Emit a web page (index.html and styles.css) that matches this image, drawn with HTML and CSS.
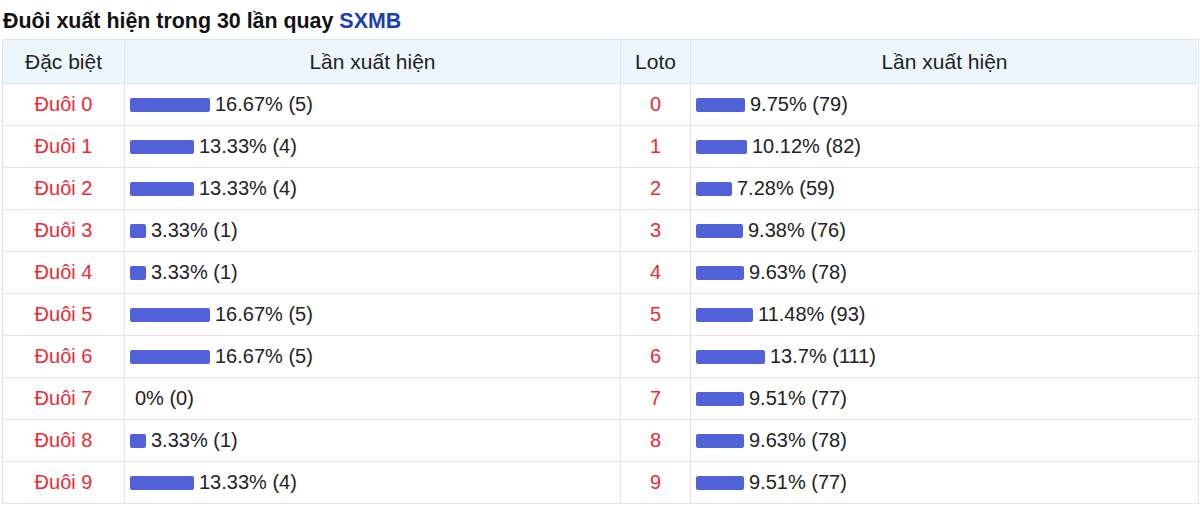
FILE: index.html
```html
<!DOCTYPE html>
<html lang="vi">
<head>
<meta charset="UTF-8" />
<meta name="viewport" content="width=device-width, initial-scale=1" />
<title>Đuôi xuất hiện SXMB</title>
<link rel="stylesheet" href="styles.css">
</head>
<body>
  <h3 class="title">Đuôi xuất hiện trong 30 lần quay <span class="brand">SXMB</span></h3>

  <table class="stats">
    <thead>
      <tr>
        <th class="col-name">Đặc biệt</th>
        <th class="col-bar">Lần xuất hiện</th>
        <th class="col-loto">Loto</th>
        <th class="col-bar2">Lần xuất hiện</th>
      </tr>
    </thead>
    <tbody id="statsBody"></tbody>
  </table>

<script>
  const special = [
    [16.67, 5], [13.33, 4], [13.33, 4], [3.33, 1], [3.33, 1],
    [16.67, 5], [16.67, 5], [0, 0], [3.33, 1], [13.33, 4]
  ];
  const loto = [
    [9.75, 79], [10.12, 82], [7.28, 59], [9.38, 76], [9.63, 78],
    [11.48, 93], [13.7, 111], [9.51, 77], [9.63, 78], [9.51, 77]
  ];

  function bar(pct, count, scale) {
    const w = Math.round(pct * scale);
    const b = w > 0 ? `<span class="bar" style="width:${w}px"></span>` : `<span class="bar empty"></span>`;
    return `${b}<span class="val">${pct}% (${count})</span>`;
  }

  const body = document.getElementById("statsBody");
  for (let i = 0; i < 10; i++) {
    const tr = document.createElement("tr");
    tr.innerHTML = `
      <td class="name">Đuôi ${i}</td>
      <td class="cell-bar">${bar(special[i][0], special[i][1], 4.8)}</td>
      <td class="name">${i}</td>
      <td class="cell-bar">${bar(loto[i][0], loto[i][1], 5)}</td>
    `;
    body.appendChild(tr);
  }
</script>
</body>
</html>
```

FILE: styles.css
```css
* {
  box-sizing: border-box;
}
body {
  margin: 0;
  padding: 0 1px 0 2px;
  font-family: "Liberation Sans", Arial, sans-serif;
  color: #222;
  background: #fff;
}

.title {
  margin: 0;
  padding: 9px 1px 6px;
  font-size: 21.4px;
  line-height: 24px;
  font-weight: bold;
  color: #111;
}
.title .brand {
  color: #1a3fb0;
}

/* Table */
.stats {
  width: 100%;
  border-collapse: collapse;
  font-size: 20px;
}
.stats th,
.stats td {
  border: 1px solid #e3e5e8;
  height: 42px;
  padding: 0 5px;
}
.stats th {
  background: #eef6fd;
  font-weight: normal;
  font-size: 21px;
  color: #222;
  height: 44px;
  text-align: center;
}
.col-name { width: 122px; }
.col-bar { width: 496px; }
.col-loto { width: 70px; }

.stats td.name {
  text-align: center;
  color: #ee2a34;
}
.cell-bar {
  text-align: left;
  white-space: nowrap;
}
.bar {
  display: inline-block;
  height: 14px;
  background: #5162d9;
  border-radius: 2px;
  vertical-align: -1px;
  margin-right: 5px;
}
.bar.empty {
  width: 0;
}
.val {
  color: #222;
}
```
